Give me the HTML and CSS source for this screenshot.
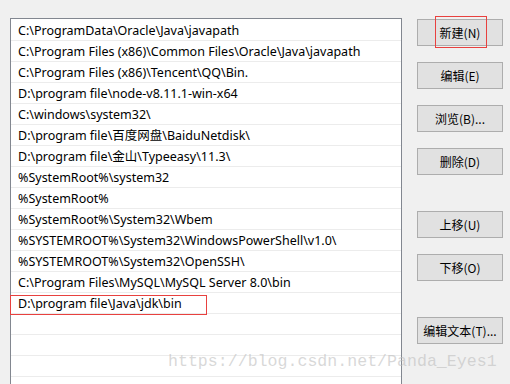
FILE: index.html
```html
<!DOCTYPE html>
<html lang="zh-CN">
<head>
  <meta charset="UTF-8" />
  <title>编辑环境变量</title>
  <link rel="stylesheet" href="styles.css">
</head>
<body>
  <div class="dialog">
    <ul class="path-list">
      <li>C:\ProgramData\Oracle\Java\javapath</li>
      <li>C:\Program Files (x86)\Common Files\Oracle\Java\javapath</li>
      <li>C:\Program Files (x86)\Tencent\QQ\Bin.</li>
      <li>D:\program file\node-v8.11.1-win-x64</li>
      <li>C:\windows\system32\</li>
      <li>D:\program file\百度网盘\BaiduNetdisk\</li>
      <li>D:\program file\金山\Typeeasy\11.3\</li>
      <li>%SystemRoot%\system32</li>
      <li>%SystemRoot%</li>
      <li>%SystemRoot%\System32\Wbem</li>
      <li>%SYSTEMROOT%\System32\WindowsPowerShell\v1.0\</li>
      <li>%SYSTEMROOT%\System32\OpenSSH\</li>
      <li>C:\Program Files\MySQL\MySQL Server 8.0\bin</li>
      <li class="marked">D:\program file\Java\jdk\bin</li>
      <li></li>
      <li></li>
      <li></li>
      <li></li>
    </ul>

    <div class="actions">
      <div class="btn-group">
        <button class="btn marked">新建(N)</button>
        <button class="btn">编辑(E)</button>
        <button class="btn">浏览(B)...</button>
        <button class="btn">删除(D)</button>
      </div>
      <div class="btn-group">
        <button class="btn">上移(U)</button>
        <button class="btn">下移(O)</button>
      </div>
      <div class="btn-group">
        <button class="btn">编辑文本(T)...</button>
      </div>
    </div>
  </div>

  <div class="watermark">https://blog.csdn.net/Panda_Eyes1</div>
</body>
</html>
```

FILE: styles.css
```css
html, body {
  height: 100%;
}
body {
  margin: 0;
  background: #f0f0f0;
  font-family: "Noto Sans", "Noto Sans CJK SC", sans-serif;
  font-size: 12.5px;
  color: #000;
  overflow: hidden;
  position: relative;
}
.dialog {
  display: flex;
  align-items: flex-start;
  padding: 18px 0 0 10px;
  gap: 15px;
}
.path-list {
  list-style: none;
  margin: 0;
  padding: 1px 0 0 0;
  width: 390px;
  background: #fff;
  border: 1px solid #828790;
}
.path-list li {
  position: relative;
  height: 18px;
  line-height: 18px;
  padding: 2px 0 0 7px;
  border-bottom: 1px solid #ececec;
  white-space: nowrap;
}
.path-list li.marked::after {
  content: "";
  position: absolute;
  left: -1px;
  top: 2px;
  width: 195px;
  height: 18px;
  border: 1px solid #e8413f;
}
.actions {
  display: flex;
  flex-direction: column;
  gap: 36px;
  padding-top: 1px;
}
.btn-group {
  display: flex;
  flex-direction: column;
  gap: 16px;
}
.btn {
  position: relative;
  width: 86px;
  height: 27px;
  padding: 0 0 1px 0;
  background: #e1e1e1;
  border: 1px solid #adadad;
  font-family: "Noto Sans CJK SC", sans-serif;
  font-size: 12px;
  color: #000;
}
.btn.marked::after {
  content: "";
  position: absolute;
  left: 17px;
  top: -4px;
  width: 50px;
  height: 30px;
  border: 1px solid #e8413f;
}
.watermark {
  position: absolute;
  left: 168px;
  top: 352px;
  font-family: "Liberation Mono", monospace;
  font-size: 16.6px;
  color: rgba(190, 190, 190, 0.6);
  white-space: nowrap;
}
```
